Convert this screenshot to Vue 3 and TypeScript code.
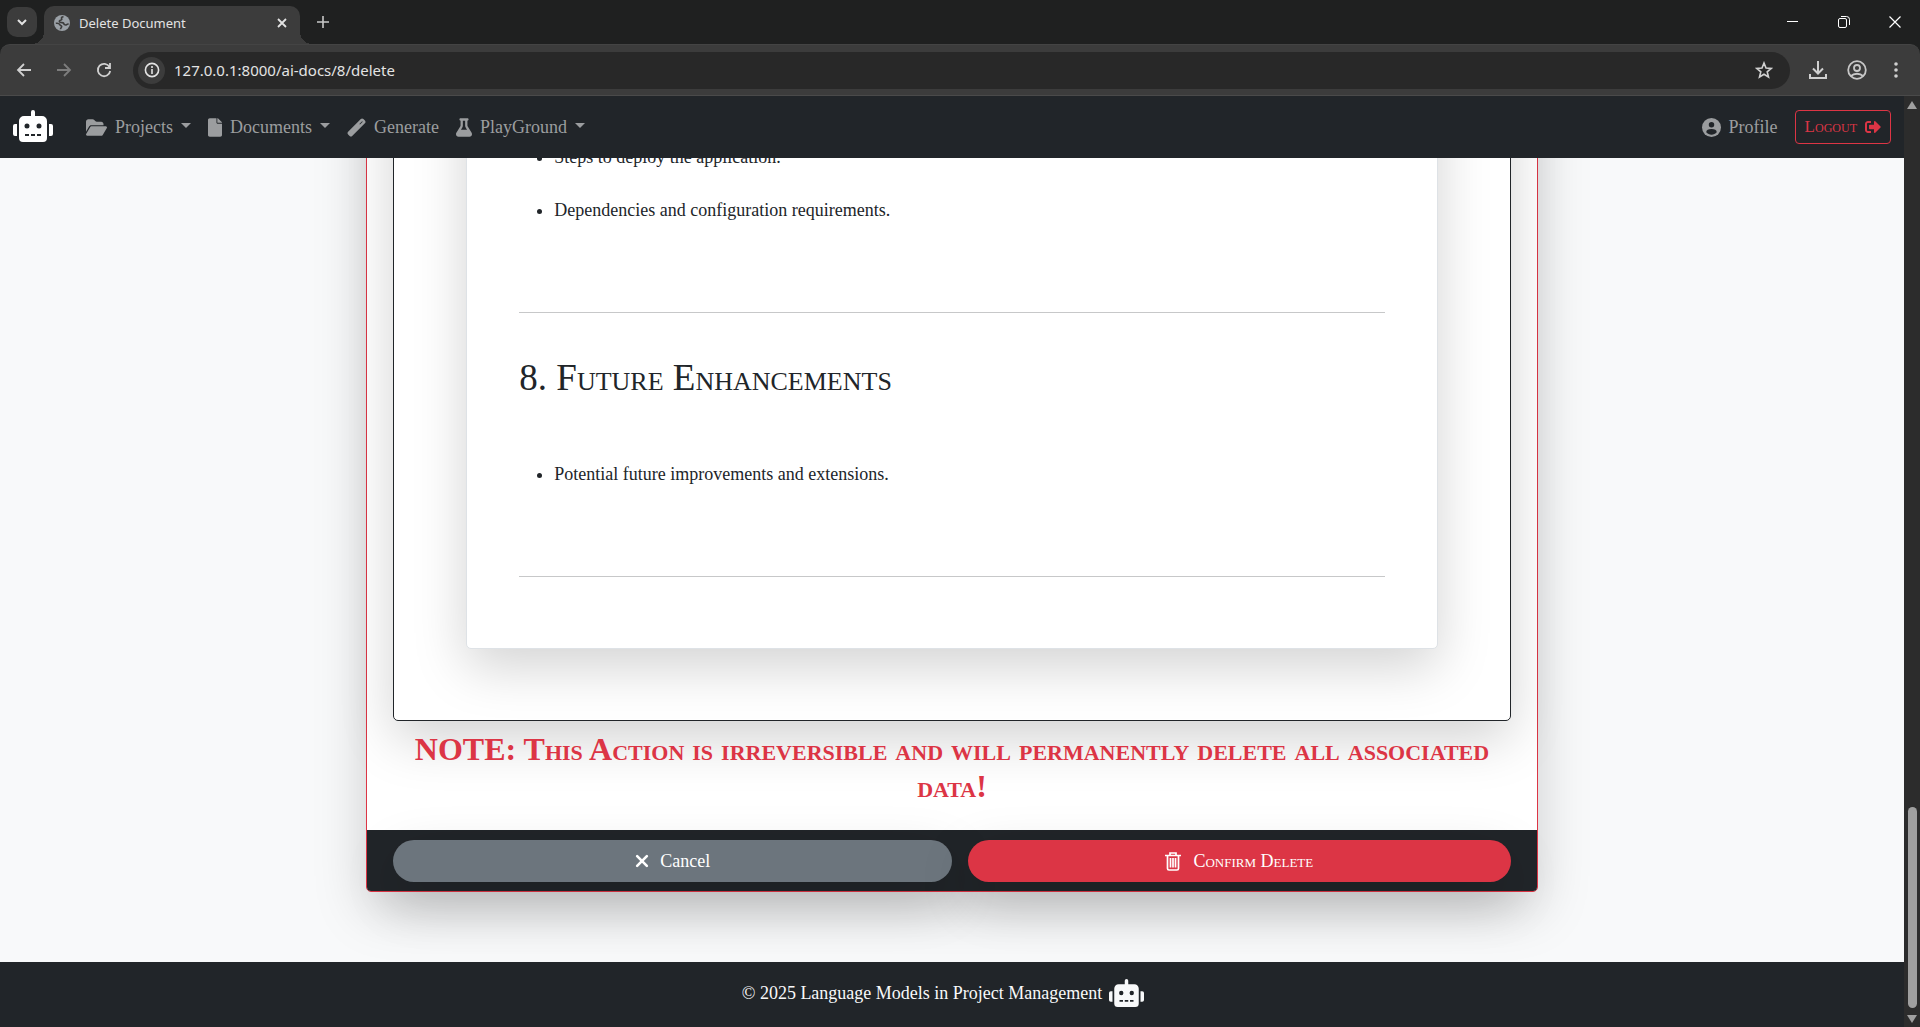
<script setup lang="ts">
interface NavItem {
  label: string
  icon: string
  box: string
  width: number
  menu: boolean
}

const robot =
  'M32 224H64V416H32A32 32 0 0 1 0 384V256A32 32 0 0 1 32 224Zm512-48V448a64 64 0 0 1-64 64H160a64 64 0 0 1-64-64V176a80 80 0 0 1 80-80H288V32a32 32 0 0 1 64 0V96H464A80 80 0 0 1 544 176ZM264 256a40 40 0 1 0-40 40A40 40 0 0 0 264 256Zm-8 128H192v32h64Zm96 0H288v32h64ZM456 256a40 40 0 1 0-40 40A40 40 0 0 0 456 256Zm-8 128H384v32h64ZM640 256V384a32 32 0 0 1-32 32H576V224h32A32 32 0 0 1 640 256Z'

const nav: NavItem[] = [
  {
    label: 'Projects',
    icon: 'M88.7 223.8L0 375.800V96C0 60.700 28.700 32 64 32H181.500c17 0 33.300 6.700 45.300 18.700l26.500 26.500c12 12 28.300 18.700 45.300 18.700H416c35.300 0 64 28.700 64 64v32H144c-22.800 0-43.800 12.100-55.300 31.800zm27.600 16.100C122.100 230 132.600 224 144 224H544c11.500 0 22 6.100 27.700 16.100s5.700 22.200-.1 32.100l-112 192C453.900 474 443.400 480 432 480H32c-11.500 0-22-6.100-27.700-16.100s-5.700-22.200 .1-32.100l112-192z',
    box: '0 0 576 512',
    width: 21,
    menu: true,
  },
  {
    label: 'Documents',
    icon: 'M0 48C0 21.500 21.500 0 48 0H232V128c0 13.300 10.700 24 24 24H384V464c0 26.500-21.500 48-48 48H48c-26.500 0-48-21.500-48-48V48zm384 74v6H256V0h6c6.400 0 12.500 2.500 17 7l98 98c4.500 4.500 7 10.600 7 17z',
    box: '0 0 384 512',
    width: 14,
    menu: true,
  },
  {
    label: 'Generate',
    icon: 'M372 30a50 50 0 0 1 70 0l40 40a50 50 0 0 1 0 70L140 482a50 50 0 0 1-70 0l-40-40a50 50 0 0 1 0-70zM408 88L334 162l16 16L424 104z',
    box: '0 0 512 512',
    width: 19,
    menu: false,
  },
  {
    label: 'PlayGround',
    icon: 'M288 0H160 128C110.300 0 96 14.300 96 32s14.300 32 32 32V196.800c0 11.800-3.300 23.500-9.500 33.500L10.300 406.200C3.600 417.200 0 429.700 0 442.600C0 480.900 31.100 512 69.400 512H378.600c38.300 0 69.400-31.100 69.400-69.400c0-12.800-3.600-25.400-10.300-36.400L329.500 230.400c-6.200-10.100-9.500-21.700-9.500-33.500V64c17.700 0 32-14.300 32-32s-14.300-32-32-32H288zM192 196.800V64h64V196.800c0 23.700 6.600 46.900 19 67.100L309.500 320h-171L173 263.900c12.400-20.200 19-43.400 19-67.100z',
    box: '0 0 448 512',
    width: 16,
    menu: true,
  },
]
</script>

<template>
  <div class="window">
    <header class="browser">
      <div class="tabs">
        <button class="tab-search" aria-label="Search tabs">
          <svg width="12" height="12" viewBox="0 0 12 12"><path d="M2 4l4 4 4-4" fill="none" stroke="#e3e3e3" stroke-width="2" /></svg>
        </button>
        <div class="tab">
          <svg width="16" height="16" viewBox="0 0 16 16">
            <circle cx="8" cy="8" r="8" fill="#9aa0a6" />
            <path d="M9.500 1.800c-2 .2-2.500 1-1.800 2 .5 1-.7 1.400-1.700 1.600-1 .3-1 1.800.5 2 1.500 0 3 0 3.300 1.300.3 1.200 1.700 1.500 2.700 1s1.700-.5 2-1.200M1.800 8.300c2-.3 3.500.2 3.900 1.300.3 1 2 .7 2 2 0 1-1.200 1.200-1.200 2.600" fill="none" stroke="#3c3c3c" stroke-width="1.600" />
          </svg>
          <span class="tab-title">Delete Document</span>
          <button class="plain" aria-label="Close tab">
            <svg width="10" height="10" viewBox="0 0 10 10"><path d="M1 1l8 8M9 1l-8 8" stroke="#e3e3e3" stroke-width="1.800" /></svg>
          </button>
        </div>
        <button class="plain new-tab" aria-label="New tab">
          <svg width="12" height="12" viewBox="0 0 12 12"><path d="M6 0v12M0 6h12" stroke="#c7c7c7" stroke-width="1.600" /></svg>
        </button>
        <div class="controls">
          <button class="plain" aria-label="Minimize"><svg width="12" height="12" viewBox="0 0 12 12"><path d="M0 5.500h11" stroke="#fff" /></svg></button>
          <button class="plain" aria-label="Restore">
            <svg width="12" height="12" viewBox="0 0 12 12"><path d="M.5 4a1.500 1.500 0 0 1 1.500-1.500h5A1.500 1.500 0 0 1 8.500 4v6A1.500 1.500 0 0 1 7 11.500H2A1.500 1.500 0 0 1 .5 10zM3 .5h5.500a3 3 0 0 1 3 3V9" fill="none" stroke="#fff" /></svg>
          </button>
          <button class="plain" aria-label="Close"><svg width="12" height="12" viewBox="0 0 12 12"><path d="M.5 .5l11 11M11.500 .5l-11 11" stroke="#fff" stroke-width="1.200" /></svg></button>
        </div>
      </div>
      <div class="toolbar">
        <button class="plain" aria-label="Back"><svg width="16" height="16" viewBox="0 0 16 16"><path d="M15 8H2M8 2L2 8l6 6" fill="none" stroke="#d0d0d0" stroke-width="1.800" /></svg></button>
        <button class="plain" aria-label="Forward"><svg width="16" height="16" viewBox="0 0 16 16"><path d="M1 8h13M8 2l6 6-6 6" fill="none" stroke="#7d7d7d" stroke-width="1.800" /></svg></button>
        <button class="plain" aria-label="Reload"><svg width="16" height="16" viewBox="0 0 16 16"><path d="M13.500 5A6.200 6.200 0 1 0 14.200 9M14 1v5H9" fill="none" stroke="#d0d0d0" stroke-width="1.800" /></svg></button>
        <div class="address">
          <span class="info">
            <svg width="16" height="16" viewBox="0 0 16 16"><circle cx="8" cy="8" r="6.600" fill="none" stroke="#e3e3e3" stroke-width="1.600" /><path d="M8 7v5M8 4v2" stroke="#e3e3e3" stroke-width="1.600" /></svg>
          </span>
          <input aria-label="Address" value="127.0.0.1:8000/ai-docs/8/delete" />
          <button class="plain" aria-label="Bookmark">
            <svg width="18" height="18" viewBox="0 0 18 18"><path d="M9 2l2 5 5.200.4-4 3.400 1.300 5.200L9 13.200 4.500 16l1.300-5.200-4-3.400L7 7z" fill="none" stroke="#d0d0d0" stroke-width="1.600" /></svg>
          </button>
        </div>
        <div class="tools">
          <button class="plain" aria-label="Downloads"><svg width="18" height="18" viewBox="0 0 18 18"><path d="M9 0v12M4 7.500l5 5 5-5M1 13v4h16v-4" fill="none" stroke="#d0d0d0" stroke-width="2" /></svg></button>
          <button class="plain" aria-label="Account"><svg width="20" height="20" viewBox="0 0 20 20"><g fill="none" stroke="#c7c7c7" stroke-width="1.800"><circle cx="10" cy="10" r="8.800" /><circle cx="10" cy="8" r="3" /><path d="M4 16c3-3 9-3 12 0" /></g></svg></button>
          <button class="plain" aria-label="Menu"><svg width="18" height="18" viewBox="0 0 18 18" fill="#d0d0d0"><circle cx="9" cy="3" r="1.800" /><circle cx="9" cy="9" r="1.800" /><circle cx="9" cy="15" r="1.800" /></svg></button>
        </div>
      </div>
    </header>

    <div class="viewport">
      <div class="site">
        <nav class="navbar">
          <a class="brand" href="#" aria-label="Home"><svg width="40" height="32" viewBox="0 0 640 512"><path :d="robot" fill="#fff" /></svg></a>
          <a v-for="item in nav" :key="item.label" class="nav-link" href="#">
            <svg :width="item.width" height="19" :viewBox="item.box"><path :d="item.icon" fill="currentColor" fill-rule="evenodd" /></svg>
            <span>{{ item.label }}</span>
            <i v-if="item.menu" class="caret"></i>
          </a>
          <div class="account">
            <a class="nav-link" href="#">
              <svg width="19" height="19" viewBox="0 0 18 18"><circle cx="9" cy="9" r="9" fill="currentColor" /><circle cx="9" cy="6.500" r="2.600" fill="#212529" /><path d="M4 13.500c0-2 2-3 5-3s5 1 5 3c-2.500 3-7.500 3-10 0z" fill="#212529" /></svg>
              <span>Profile</span>
            </a>
            <button class="logout">
              Logout
              <svg width="16" height="16" viewBox="0 0 512 512"><path d="M497 273L329 441c-15 15-41 4.500-41-17v-96H152c-13.300 0-24-10.700-24-24v-96c0-13.300 10.700-24 24-24h136V88c0-21.400 25.900-32 41-17l168 168c9.300 9.400 9.300 24.600 0 34zM192 436v-40c0-6.600-5.400-12-12-12H96c-17.700 0-32-14.300-32-32V160c0-17.700 14.300-32 32-32h84c6.600 0 12-5.400 12-12V76c0-6.600-5.400-12-12-12H96c-53 0-96 43-96 96v192c0 53 43 96 96 96h84c6.600 0 12-5.400 12-12z" fill="currentColor" /></svg>
            </button>
          </div>
        </nav>

        <main class="content">
          <section class="card">
            <div class="card-body">
              <div class="preview">
                <article class="sheet">
                  <ul>
                    <li>Steps to deploy the application.</li>
                    <li>Dependencies and configuration requirements.</li>
                  </ul>
                  <hr />
                  <h2>8. Future Enhancements</h2>
                  <ul>
                    <li>Potential future improvements and extensions.</li>
                  </ul>
                  <hr />
                </article>
              </div>
              <h3>NOTE: This Action is irreversible and will permanently delete all associated data!</h3>
            </div>
            <div class="card-footer">
              <a class="btn cancel" href="#">
                <svg width="14" height="14" viewBox="0 0 13 13"><path d="M2 2l9 9M11 2l-9 9" stroke="#fff" stroke-width="2.400" stroke-linecap="round" /></svg>
                Cancel
              </a>
              <form class="confirm-form" @submit.prevent>
                <button class="btn confirm" type="submit">
                  <svg width="16" height="19" viewBox="0 0 16 19"><path d="M0 3.500h16M5 3V1h6v2M2.500 4v12.500a1.500 1.500 0 0 0 1.500 1.500h8a1.500 1.500 0 0 0 1.500-1.500V4M5.500 6v9.500M8 6v9.500M10.500 6v9.500" fill="none" stroke="#fff" stroke-width="1.700" /></svg>
                  Confirm Delete
                </button>
              </form>
            </div>
          </section>
        </main>

        <footer class="site-footer">
          <span>© 2025 Language Models in Project Management</span>
          <svg width="35" height="28" viewBox="0 0 640 512"><path :d="robot" fill="#f8f9fa" /></svg>
        </footer>
      </div>
      <div class="scrollbar" aria-hidden="true">
        <i class="arrow up"></i>
        <i class="thumb"></i>
        <i class="arrow down"></i>
      </div>
    </div>
  </div>
</template>

<style>
body {
  margin: 0;
}
</style>

<style scoped>
* {
  box-sizing: border-box;
}
.window {
  display: flex;
  flex-direction: column;
  height: 100vh;
  overflow: hidden;
  font-family: "Liberation Serif", "Times New Roman", serif;
  font-size: 18px;
  line-height: 26px;
  color: #212529;
}
svg {
  display: block;
  flex: none;
}
a {
  text-decoration: none;
}
.plain {
  display: flex;
  padding: 0;
  border: 0;
  background: none;
}

/* Browser frame */
.browser {
  flex: none;
  background: #1f2020;
  font-family: "Noto Sans", "Open Sans", sans-serif;
}
.tabs {
  display: flex;
  align-items: center;
  height: 44px;
  padding: 0 16px 0 7px;
}
.tab-search {
  display: flex;
  align-items: center;
  justify-content: center;
  width: 30px;
  height: 30px;
  padding: 0;
  border: 0;
  border-radius: 10px;
  background: #3c3c3c;
}
.tab {
  position: relative;
  display: flex;
  align-items: center;
  align-self: flex-end;
  width: 256px;
  height: 38px;
  margin-left: 7px;
  padding: 0 13px 4px 10px;
  border-radius: 10px 10px 0 0;
  background: #3c3c3c;
}
.tab::before,
.tab::after {
  content: "";
  position: absolute;
  bottom: 0;
  width: 12px;
  height: 12px;
}
.tab::before {
  left: -12px;
  background: radial-gradient(circle at 0 0, transparent 12px, #3c3c3c 12px);
}
.tab::after {
  right: -12px;
  background: radial-gradient(circle at 100% 0, transparent 12px, #3c3c3c 12px);
}
.tab-title {
  flex: 1;
  margin-left: 9px;
  font-size: 13px;
  color: #e3e3e3;
}
.new-tab {
  margin-left: 17px;
}
.controls {
  display: flex;
  gap: 39px;
  margin-left: auto;
  padding-right: 3px;
}
.toolbar {
  display: flex;
  align-items: center;
  height: 52px;
  padding: 0 15px 0 16px;
  border-top: 1px solid #444;
  border-bottom: 1px solid #4a4a4a;
  border-radius: 10px 10px 0 0;
  background: #3c3c3c;
  gap: 24px;
}
.address {
  display: flex;
  flex: 1;
  align-items: center;
  height: 37px;
  margin-left: -3px;
  padding: 0 17px 0 5px;
  border-radius: 19px;
  background: #282828;
}
.info {
  display: flex;
  align-items: center;
  justify-content: center;
  width: 27px;
  height: 27px;
  border-radius: 50%;
  background: #3c3c3c;
}
.address input {
  flex: 1;
  min-width: 0;
  margin-left: 9px;
  padding: 0;
  border: 0;
  outline: 0;
  background: none;
  font: 15px "Noto Sans", "Open Sans", sans-serif;
  color: #e3e3e3;
}
.tools {
  display: flex;
  align-items: center;
  gap: 20px;
  margin-left: -5px;
}

/* Page area */
.viewport {
  display: flex;
  flex: 1;
  min-height: 0;
}
.site {
  display: flex;
  flex: 1;
  flex-direction: column;
  min-width: 0;
  background: #f8f9fa;
}
.navbar {
  display: flex;
  flex: none;
  align-items: center;
  gap: 17px;
  height: 62px;
  padding: 0 13px;
  background: #212529;
}
.brand {
  margin: 0 16px 3px 0;
}
.nav-link {
  display: flex;
  align-items: center;
  gap: 8px;
  color: #9b9d9f;
}
.caret {
  margin-bottom: 4px;
  border: 5px solid transparent;
  border-top-color: currentColor;
  border-bottom: 0;
}
.account {
  display: flex;
  align-items: center;
  gap: 17px;
  margin-left: auto;
}
.logout {
  display: flex;
  align-items: center;
  gap: 8px;
  height: 34px;
  padding: 0 9px;
  border: 1px solid #dc3545;
  border-radius: 4px;
  background: none;
  font-family: inherit;
  font-size: 17px;
  font-variant: small-caps;
  color: #dc3545;
}
.content {
  display: flex;
  flex: 1;
  flex-direction: column;
  justify-content: flex-end;
  min-height: 0;
  padding: 0 calc(100% / 6 + 49px) 70px;
  overflow: hidden;
}
.card {
  flex: none;
  border: 1px solid #dc3545;
  border-radius: 5px;
  background: #fff;
  box-shadow: 0 18px 53px rgba(0, 0, 0, 0.175);
}
.card-body {
  padding: 26px 26px 16px;
}
.preview {
  padding: 72px 72px 71px;
  border: 1px solid #212529;
  border-radius: 5px;
  box-shadow: 0 18px 53px rgba(0, 0, 0, 0.175);
}
.sheet {
  padding: 96px 52px 71px;
  border: 1px solid #dee2e6;
  border-radius: 5px;
  background: #fff;
  box-shadow: 0 18px 53px rgba(0, 0, 0, 0.175);
}
.sheet ul {
  margin: 0;
  padding-left: 35px;
}
.sheet li + li {
  margin-top: 27px;
}
.sheet hr {
  height: 1px;
  margin: 89px 0 0;
  border: 0;
  background: #c7c8c9;
}
.sheet h2 {
  margin: 44px 0 62px;
  font-size: 37px;
  font-weight: 400;
  font-variant: small-caps;
  line-height: 42px;
}
h3 {
  margin: 10px 0 9px;
  font-size: 32px;
  font-variant: small-caps;
  line-height: 37px;
  text-align: center;
  color: #dc3545;
}
.card-footer {
  display: grid;
  grid-template-columns: 1fr 1fr;
  padding: 10px 26px 9px;
  border-radius: 0 0 4px 4px;
  background: #212529;
}
.btn {
  display: flex;
  align-items: center;
  justify-content: center;
  width: 100%;
  height: 42px;
  border: 0;
  border-radius: 21px;
  box-shadow: 0 18px 53px rgba(0, 0, 0, 0.175);
  font-family: inherit;
  font-size: 18px;
  color: #fff;
}
.cancel {
  gap: 11px;
  background: #6c757d;
}
.confirm-form {
  padding-left: 16px;
}
.confirm {
  gap: 12px;
  background: #dc3545;
  font-variant: small-caps;
}
.site-footer {
  display: flex;
  flex: none;
  align-items: center;
  justify-content: center;
  gap: 7px;
  height: 65px;
  padding: 0 18px 3px 0;
  background: #212529;
  color: #f8f9fa;
}
.scrollbar {
  display: flex;
  flex: none;
  flex-direction: column;
  align-items: center;
  width: 16px;
  padding: 5px 0 4px;
  background: #2c2c2c;
}
.thumb {
  width: 9px;
  height: 201px;
  margin: auto 0 7px;
  border-radius: 5px;
  background: #9f9f9f;
}
.arrow {
  border: 5px solid transparent;
}
.up {
  border-top: 0;
  border-bottom: 8px solid #9f9f9f;
}
.down {
  border-top: 8px solid #9f9f9f;
  border-bottom: 0;
}
</style>
